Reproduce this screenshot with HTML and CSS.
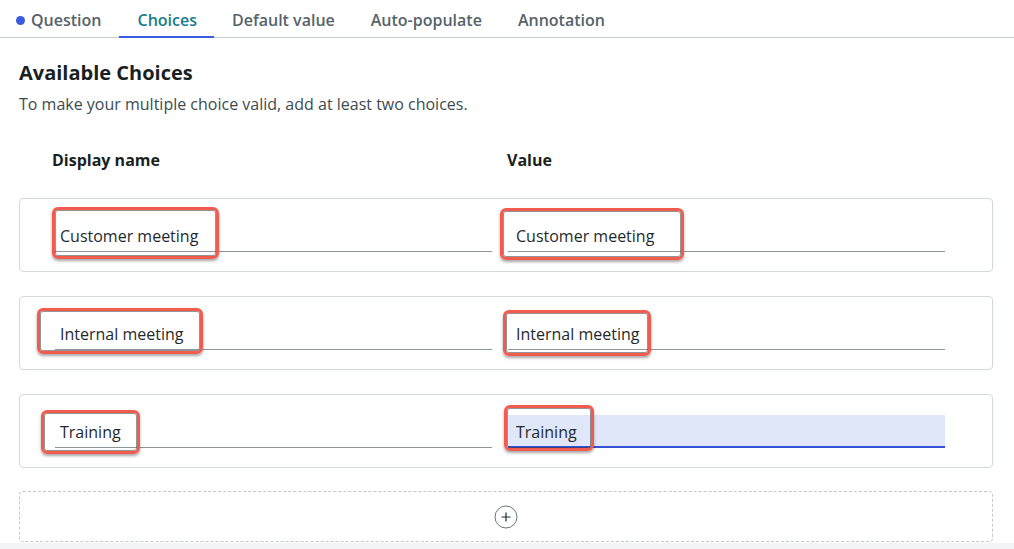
FILE: index.html
```html
<!DOCTYPE html>
<html lang="en">
<head>
<meta charset="utf-8">
<title>Choices</title>
<link rel="stylesheet" href="styles.css">
</head>
<body>
<nav class="tabs">
  <div class="tab tab-first"><span class="dot"></span>Question</div>
  <div class="tab tab-active">Choices</div>
  <div class="tab">Default value</div>
  <div class="tab">Auto-populate</div>
  <div class="tab">Annotation</div>
</nav>
<main class="content">
  <h2 class="title">Available Choices</h2>
  <p class="subtitle">To make your multiple choice valid, add at least two choices.</p>
  <div class="head">
    <div class="head-label">Display name</div>
    <div class="head-label">Value</div>
  </div>
  <div class="cards">
    <div class="card">
      <div class="field"><span class="mark m1"></span>Customer meeting</div>
      <div class="field"><span class="mark m2"></span>Customer meeting</div>
    </div>
    <div class="card">
      <div class="field"><span class="mark m3"></span>Internal meeting</div>
      <div class="field"><span class="mark m4"></span>Internal meeting</div>
    </div>
    <div class="card">
      <div class="field"><span class="mark m5"></span>Training</div>
      <div class="field field-focus"><span class="mark m6"></span>Training</div>
    </div>
    <div class="add">
      <span class="add-btn">
        <svg width="24" height="24" viewBox="0 0 24 24"><circle cx="12" cy="12" r="11" fill="none" stroke="#6b767a" stroke-width="1"/><path d="M12 7.5v9M7.5 12h9" stroke="#1f2a2e" stroke-width="1.2"/></svg>
      </span>
    </div>
  </div>
</main>
<footer class="footer"></footer>
</body>
</html>
```
FILE: styles.css
```css
* { box-sizing: border-box; }
html, body { margin: 0; padding: 0; }
body {
  font-family: "Open Sans", "Noto Sans", sans-serif;
  color: #1f2a2e;
  background: #fff;
  width: 1014px;
  height: 549px;
  overflow: hidden;
}
.tabs {
  display: flex;
  height: 38px;
  padding-left: 16px;
  border-bottom: 1px solid #c8cdd0;
}
.tab {
  display: flex;
  align-items: center;
  padding: 2px 18px 0 18px;
  font-size: 16px;
  font-weight: 600;
  color: #56636a;
  height: 38px;
  margin-bottom: -1px;
}
.tab-first { padding-left: 0; }
.dot {
  width: 9px;
  height: 9px;
  border-radius: 50%;
  background: #3b5be0;
  margin-right: 6px;
}
.tab-active {
  color: #177c8c;
  border-bottom: 2px solid #3b5be0;
  padding-top: 4px;
  padding-left: 18px;
  padding-right: 17px;
}
.content {
  padding: 0 21px 0 19px;
}
.title {
  margin: 22px 0 0;
  font-size: 20px;
  line-height: 26px;
  font-weight: 700;
  color: #1a1f22;
}
.subtitle {
  margin: 8px 0 0;
  font-size: 16px;
  line-height: 20px;
  color: #3e4b51;
}
.head {
  display: grid;
  grid-template-columns: 1fr 1fr;
  column-gap: 16px;
  padding: 0 47px 0 33px;
  margin-top: 36px;
}
.head-label {
  font-size: 16px;
  line-height: 20px;
  font-weight: 700;
  color: #1a1f22;
}
.cards {
  display: flex;
  flex-direction: column;
  gap: 24px;
  margin-top: 28px;
}
.card {
  display: grid;
  grid-template-columns: 1fr 1fr;
  column-gap: 16px;
  height: 74px;
  padding: 20px 47px 19px 35px;
  border: 1px solid #d3d8da;
  border-radius: 4px;
}
.field {
  position: relative;
  height: 33px;
  padding: 6px 5px 0 8px;
  font-size: 16px;
  line-height: 22px;
  color: #1f2a2e;
  border-bottom: 1px solid #8c979b;
}
.card .field:first-child { padding-left: 5px; }
.field-focus {
  background: #dfe7f9;
  border-bottom: 2px solid #3551d6;
}
.mark {
  position: absolute;
  border: 3px solid #f25c4e;
  border-radius: 6px;
  box-shadow: inset 0 0 0 1px rgba(60, 60, 60, 0.55), 0 2px 3px rgba(0, 0, 0, 0.35);
}
.m1 { left: -3px; top: -12px; width: 167px; height: 52px; }
.m2 { left: -8px; top: -11px; width: 184px; height: 52px; }
.m3 { left: -18px; top: -9px; width: 166px; height: 46px; }
.m4 { left: -5px; top: -7px; width: 148px; height: 46px; }
.m5 { left: -14px; top: -5px; width: 99px; height: 44px; }
.m6 { left: -4px; top: -10px; width: 90px; height: 46px; }
.add {
  margin-top: -1px;
  height: 51px;
  border: 1px dashed #c3c8cb;
  border-radius: 4px;
  display: flex;
  align-items: center;
  justify-content: center;
}
.add-btn {
  display: flex;
}
.footer {
  margin-top: 1px;
  height: 10px;
  background: #f3f4f5;
}
```
